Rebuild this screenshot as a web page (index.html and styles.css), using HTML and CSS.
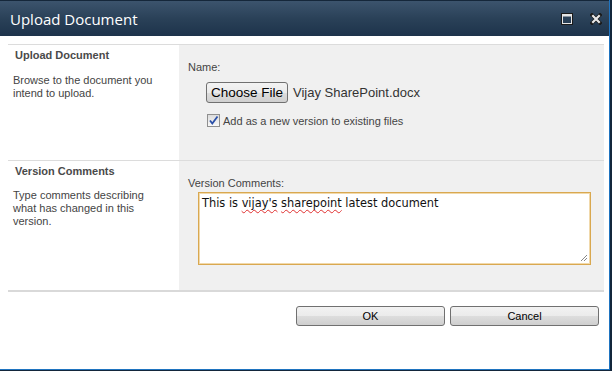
FILE: index.html
```html
<!DOCTYPE html>
<html>
<head>
<meta charset="utf-8">
<link rel="stylesheet" href="styles.css">
</head>
<body>
<div class="window">
  <div class="titlebar">
    <span class="title">Upload Document</span>
    <span class="controls">
      <svg class="ico" width="14" height="14" viewBox="0 0 14 14"><rect x="1.5" y="1.5" width="11" height="11" fill="none" stroke="#1a1a1a" stroke-width="1"/><rect x="2.5" y="2.5" width="9" height="9" fill="none" stroke="#e6e6e6" stroke-width="1"/><rect x="2.5" y="2.5" width="9" height="2" fill="#e6e6e6"/></svg>
      <svg class="ico" width="12" height="12" viewBox="0 0 12 12"><path d="M2 2 L10 10 M10 2 L2 10" stroke="#1a1a1a" stroke-width="3.6" stroke-linecap="square"/><path d="M2.3 2.3 L9.7 9.7 M9.7 2.3 L2.3 9.7" stroke="#e8e8e8" stroke-width="2.2"/></svg>
    </span>
  </div>
  <div class="content">
    <div class="form">
      <div class="cell left r1">
        <div class="head">Upload Document</div>
        <div class="desc">Browse to the document you intend to upload.</div>
      </div>
      <div class="cell right r1">
        <div class="label">Name:</div>
        <div class="filerow">
          <button class="choose">Choose File</button>
          <span class="fname">Vijay SharePoint.docx</span>
        </div>
        <div class="checkrow">
          <span class="checkbox"><svg width="11" height="11" viewBox="0 0 11 11"><path d="M2 5.5 L4.3 8.5 L9.5 1.5" fill="none" stroke="#2a4fa8" stroke-width="1.8"/></svg></span>
          <span class="clabel">Add as a new version to existing files</span>
        </div>
      </div>
      <div class="cell left r2">
        <div class="head">Version Comments</div>
        <div class="desc">Type comments describing what has changed in this version.</div>
      </div>
      <div class="cell right r2">
        <div class="label">Version Comments:</div>
        <div class="textarea">This is <span class="sp">vijay's</span> <span class="sp">sharepoint</span> latest document
          <svg class="grip" width="9" height="9" viewBox="0 0 9 9"><path d="M8 2 L2 8 M8 5 L5 8" stroke="#888" stroke-width="1"/></svg>
        </div>
      </div>
    </div>
    <div class="buttons">
      <button class="btn">OK</button>
      <button class="btn">Cancel</button>
    </div>
  </div>
</div>
</body>
</html>
```

FILE: styles.css
```css
html, body {
  margin: 0;
  padding: 0;
  background: #13263b;
  width: 612px;
  height: 371px;
  overflow: hidden;
}
.window {
  height: 370px;
  width: 610px;
  border-right: 1px solid #1f74c0;
  border-bottom: 1px solid #1f74c0;
  box-sizing: border-box;
  display: flex;
  flex-direction: column;
  font-family: "Liberation Sans", Arial, sans-serif;
}
.titlebar {
  height: 36px;
  flex: none;
  box-sizing: border-box;
  border-top: 1px solid #15273a;
  background: linear-gradient(#3c546d, #2a4158 50%, #1d334b);
  display: flex;
  align-items: center;
  justify-content: space-between;
  padding: 0 7px 0 10px;
}
.title {
  color: #ffffff;
  font-family: "Open Sans", "Liberation Sans", sans-serif;
  font-size: 15px;
}
.controls {
  display: flex;
  align-items: center;
  gap: 16px;
}
.ico { display: block; }
.content {
  flex: 1;
  background: #ffffff;
  padding: 8px 5px 0 8px;
}
.form {
  display: grid;
  grid-template-columns: 171px 425px;
  border-top: 1px solid #dcdcdc;
  border-bottom: 2px solid #d9d9d9;
}
.cell { box-sizing: border-box; }
.r1 { height: 116px; border-bottom: 1px solid #dcdcdc; }
.r2 { height: 129px; }
.left {
  padding: 3px 8px 0 5px;
  color: #444;
  font-size: 11px;
}
.right {
  background: #f0f0f0;
  padding: 0 0 0 9px;
  font-size: 11px;
  color: #444;
}
.head {
  font-weight: bold;
  color: #4a4a4a;
  line-height: 14px;
  margin-left: 2px;
}
.desc {
  width: 146px;
  margin-top: 12px;
  line-height: 13px;
  color: #444;
}
.r2 .desc { margin-top: 11px; }
.r1 .label { margin-top: 15px; line-height: 14px; }
.r2 .label { margin-top: 15px; line-height: 14px; }
.filerow {
  margin-top: 8px;
  margin-left: 18px;
  display: flex;
  align-items: center;
  gap: 5px;
}
.choose {
  font-family: "Liberation Sans", Arial, sans-serif;
  font-size: 13.5px;
  height: 21px;
  width: 82px;
  padding: 0;
  border: 1px solid #707070;
  border-radius: 3px;
  background: linear-gradient(#f3f3f3, #ebebeb 50%, #dddddd 51%, #cfcfcf);
  color: #000;
}
.fname {
  font-size: 13px;
  color: #333;
}
.checkrow {
  margin-top: 11px;
  margin-left: 19px;
  display: flex;
  align-items: center;
  gap: 3px;
}
.checkbox {
  width: 13px;
  height: 13px;
  box-sizing: border-box;
  border: 1px solid #8f8f8f;
  background: linear-gradient(#dcdcdc, #f8f8f8);
  display: flex;
  align-items: center;
  justify-content: center;
}
.checkbox svg { display: block; }
.clabel { font-size: 11px; color: #444; }
.textarea {
  position: relative;
  margin-top: 2px;
  margin-left: 10px;
  width: 393px;
  height: 73px;
  box-sizing: border-box;
  border: 1px solid #d9a850;
  box-shadow: inset 0 0 0 1px #f1d9ab;
  background: #fff;
  padding: 3px 3px;
  font-family: "DejaVu Sans", sans-serif;
  font-size: 11.4px;
  color: #111;
  line-height: 15px;
}
.sp {
  text-decoration: underline wavy #e03030;
  text-decoration-thickness: 1px;
  text-underline-offset: 2px;
}
.grip {
  position: absolute;
  right: 2px;
  bottom: 2px;
}
.buttons {
  display: flex;
  justify-content: flex-end;
  gap: 5px;
  margin-top: 14px;
  padding-right: 5px;
}
.btn {
  width: 149px;
  height: 20px;
  padding: 0;
  font-family: "Liberation Sans", Arial, sans-serif;
  font-size: 11px;
  color: #000;
  border: 1px solid #707070;
  border-radius: 3px;
  background: linear-gradient(#f2f2f2, #ebebeb 50%, #dddddd 51%, #cfcfcf);
}
```
